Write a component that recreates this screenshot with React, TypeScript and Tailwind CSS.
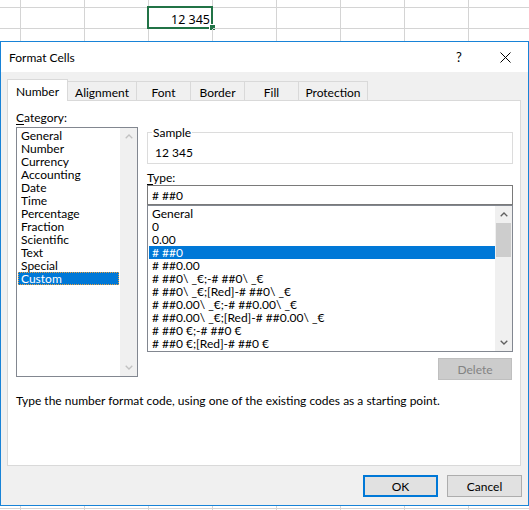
import React from "react";

const categories = [
  "General",
  "Number",
  "Currency",
  "Accounting",
  "Date",
  "Time",
  "Percentage",
  "Fraction",
  "Scientific",
  "Text",
  "Special",
  "Custom",
];

const types = [
  "General",
  "0",
  "0.00",
  "# ##0",
  "# ##0.00",
  "# ##0\\ _€;-# ##0\\ _€",
  "# ##0\\ _€;[Red]-# ##0\\ _€",
  "# ##0.00\\ _€;-# ##0.00\\ _€",
  "# ##0.00\\ _€;[Red]-# ##0.00\\ _€",
  "# ##0 €;-# ##0 €",
  "# ##0 €;[Red]-# ##0 €",
];

function Chevron({ up, color }: { up: boolean; color: string }) {
  return (
    <svg width="8" height="5" viewBox="0 0 8 5" fill="none">
      <path
        d={up ? "M0.7 4.3 L4 1 L7.3 4.3" : "M0.7 0.7 L4 4 L7.3 0.7"}
        stroke={color}
        strokeWidth="1.3"
      />
    </svg>
  );
}

function Sheet() {
  const rows = Array.from({ length: 28 }, (_, i) => i);
  const cols = Array.from({ length: 10 }, (_, i) => i);
  return (
    <div className="flex flex-col">
      {rows.map((r) => (
        <div
          key={r}
          className={
            "flex shrink-0 " +
            (r === 0 ? "h-[8px]" : r === 1 ? "h-[21px]" : "h-[20px]")
          }
        >
          {cols.map((c) => (
            <div
              key={c}
              className={
                "relative shrink-0 h-full border-r border-b border-[#d4d4d4] " +
                (c === 0 ? "w-[21px]" : "w-[64px]")
              }
            >
              {r === 1 && c === 3 && (
                <>
                  <div className="flex h-full items-center justify-end pr-[2px] pt-[2px] text-[12.5px] leading-[15px] [font-family:'Noto_Sans',sans-serif] text-black">
                    12 345
                  </div>
                  <div className="absolute -left-[2px] -top-[2px] w-[66px] h-[23px] border-2 border-[#217346]" />
                  <div className="absolute left-[60px] top-[16px] w-[6px] h-[6px] bg-[#217346] border-t border-l border-white" />
                </>
              )}
            </div>
          ))}
        </div>
      ))}
    </div>
  );
}

function Dialog() {
  const tabs = [
    { label: "Alignment", w: "w-[69px]" },
    { label: "Font", w: "w-[54px]" },
    { label: "Border", w: "w-[54px]" },
    { label: "Fill", w: "w-[54px]" },
    { label: "Protection", w: "w-[69px]" },
  ];
  return (
    <div className="absolute left-0 top-[41px] w-[529px] h-[465px] border border-[#1883d7] bg-[#f0f0f0] flex flex-col text-[12px] leading-[15px] text-black">
      {/* Title bar */}
      <div className="h-[30px] shrink-0 bg-white flex items-center">
        <div className="flex-1 pl-[8px] text-[12px]">Format Cells</div>
        <div className="w-[46px] h-full flex items-center justify-center text-[13px]">
          ?
        </div>
        <div className="w-[46px] h-full flex items-center justify-center">
          <svg width="11" height="11" viewBox="0 0 11 11" fill="none">
            <path d="M0.5 0.5 L10.5 10.5 M10.5 0.5 L0.5 10.5" stroke="#000" strokeWidth="1" />
          </svg>
        </div>
      </div>

      {/* Body */}
      <div className="flex-1 flex flex-col pt-[7px]">
        {/* Tabs */}
        <div className="flex items-end h-[21px] ml-[6px]">
          <div className="relative z-10 -mb-px h-[22px] w-[61px] bg-white border border-b-0 border-[#d9d9d9] text-center pt-[4px]">
            Number
          </div>
          {tabs.map((t) => (
            <div
              key={t.label}
              className={
                "h-[19px] border-t border-r border-[#d9d9d9] text-center pt-[3px] " +
                t.w
              }
            >
              {t.label}
            </div>
          ))}
        </div>

        {/* Panel */}
        <div className="h-[366px] ml-[6px] mr-[7px] bg-white border border-[#d9d9d9] flex flex-col pt-[9px] pl-[8px]">
          <div className="flex gap-[9px]">
            {/* Category */}
            <div className="w-[122px] flex flex-col">
              <div className="h-[15px]">
                <span className="underline underline-offset-2">C</span>ategory:
              </div>
              <div className="mt-[2px] h-[250px] border border-[#828790] flex">
                <div className="flex-1 px-[1px] pt-[1px] flex flex-col">
                  {categories.map((c) => (
                    <div
                      key={c}
                      className={
                        "h-[13px] leading-[13px] pl-[3px] whitespace-nowrap " +
                        (c === "Custom"
                          ? "bg-[#0078d7] text-white outline-1 outline-dotted outline-[#e8a040] -outline-offset-1"
                          : "")
                      }
                    >
                      {c}
                    </div>
                  ))}
                </div>
                <div className="w-[17px] bg-[#f0f0f0] flex flex-col justify-between">
                  <div className="h-[17px] flex items-center justify-center">
                    <Chevron up color="#c2c2c2" />
                  </div>
                  <div className="h-[17px] flex items-center justify-center">
                    <Chevron up={false} color="#c2c2c2" />
                  </div>
                </div>
              </div>
            </div>

            {/* Right column */}
            <div className="w-[366px] flex flex-col">
              <div className="relative mt-[22px] h-[32px] border border-[#dcdcdc] pl-[7px] pt-[12px]">
                <div className="absolute left-[4px] -top-[8px] bg-white px-[1px]">
                  Sample
                </div>
                12 345
              </div>
              <div className="mt-[6px] h-[15px]">
                <span className="underline underline-offset-2">T</span>ype:
              </div>
              <div className="h-[20px] border border-[#7a7a7a] pl-[4px] flex items-center whitespace-pre">
                # ##0
              </div>
              <div className="h-[147px] border border-[#828790] flex">
                <div className="flex-1 pl-[1px] pt-[1px] flex flex-col">
                  {types.map((t) => (
                    <div
                      key={t}
                      className={
                        "h-[13px] leading-[13px] pl-[3px] whitespace-pre " +
                        (t === "# ##0" ? "bg-[#0078d7] text-white" : "")
                      }
                    >
                      {t}
                    </div>
                  ))}
                </div>
                <div className="w-[17px] bg-[#f0f0f0] flex flex-col">
                  <div className="h-[17px] flex items-center justify-center">
                    <Chevron up color="#606060" />
                  </div>
                  <div className="h-[34px] px-[1px]">
                    <div className="h-full bg-[#cdcdcd]" />
                  </div>
                  <div className="flex-1" />
                  <div className="h-[17px] flex items-center justify-center">
                    <Chevron up={false} color="#606060" />
                  </div>
                </div>
              </div>
              <div className="mt-[6px] self-end mr-[1px] w-[74px] h-[22px] bg-[#cccccc] border border-[#bfbfbf] text-[#838383] flex items-center justify-center">
                Delete
              </div>
            </div>
          </div>
          <div className="mt-[13px] h-[15px]">
            Type the number format code, using one of the existing codes as a
            starting point.
          </div>
        </div>

        {/* Footer */}
        <div className="flex justify-end gap-[9px] pt-[9px] pr-[6px]">
          <div className="w-[75px] h-[22px] bg-[#e1e1e1] border-2 border-[#0078d7] flex items-center justify-center">
            OK
          </div>
          <div className="w-[75px] h-[22px] bg-[#e1e1e1] border border-[#adadad] flex items-center justify-center">
            Cancel
          </div>
        </div>
      </div>
    </div>
  );
}

export default function App() {
  return (
    <div className="relative w-[529px] h-[510px] overflow-hidden bg-white [font-family:Lato,sans-serif] text-black">
      <Sheet />
      <Dialog />
    </div>
  );
}
